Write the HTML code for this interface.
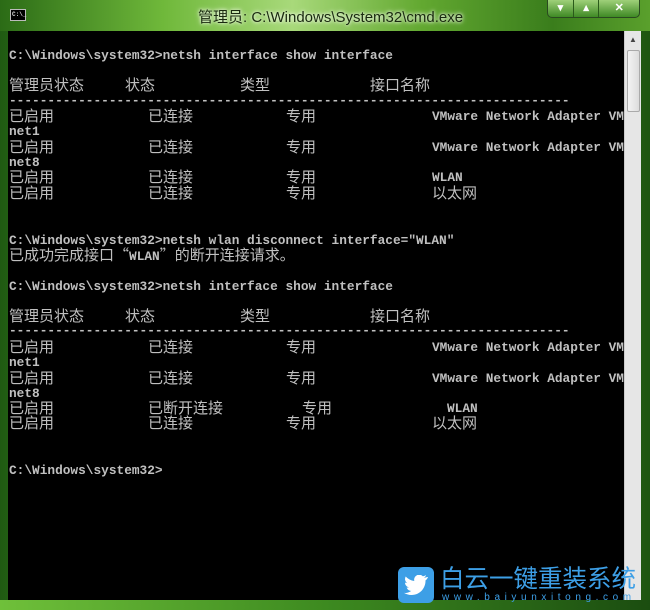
<!DOCTYPE html>
<html style="overflow:hidden;width:650px;height:610px"><head><meta charset="utf-8"><style>
*{margin:0;padding:0;box-sizing:border-box}
body{width:650px;height:610px;overflow:hidden;position:relative;background:linear-gradient(90deg,#1f5a12 0%,#4c9a25 20%,#2f6e18 40%,#7cc23e 60%,#3d8420 80%,#1e5510 100%);font-family:"Liberation Sans","Noto Sans CJK SC",sans-serif}
#title{position:absolute;left:0;top:0;width:650px;height:31px;background:linear-gradient(90deg,#2b6b16,#6fb83a 25%,#a8d97a 45%,#62a830 65%,#3a7d1c 85%,#5aa02c)}
#tt{position:absolute;left:198px;top:6px;font-size:15px;color:#1a2a10;text-shadow:0 0 6px #e8f5d8,0 0 3px #fff}
#ico{position:absolute;left:10px;top:9px;width:16px;height:12px;background:#000;border:1px solid #bbb;font:bold 6px "Liberation Mono",monospace;color:#ddd;line-height:9px;padding-left:1px}
#btns{position:absolute;left:547px;top:0;width:93px;height:18px;border:1px solid #2a4a20;border-top:none;border-radius:0 0 5px 5px;background:linear-gradient(#9fd07a,#3f8a25);display:flex}
#btns div{flex:1;border-right:1px solid #2a5a1a;color:#fff;font:bold 11px "Liberation Sans",sans-serif;text-align:center;line-height:17px}
#con{position:absolute;left:8px;top:31px;width:616px;height:569px;background:#000}
#sb{position:absolute;left:624px;top:31px;width:17px;height:569px;background:#e6e6e6;border-left:1px solid #ccc}
#thumb{position:absolute;left:2px;top:19px;width:13px;height:62px;background:linear-gradient(90deg,#f4f4f4,#dcdcdc);border:1px solid #aaa;border-radius:2px}
#bot{position:absolute;left:0;top:600px;width:650px;height:10px;background:linear-gradient(90deg,#6fc03a,#3d8a20 50%,#1b4d10)}
.r{position:absolute;color:#c0c0c0;white-space:pre;font:bold 12.8px/16px "Liberation Mono",monospace}
.c{position:absolute;color:#c0c0c0;white-space:pre;font:15px/16px "Noto Sans CJK SC",sans-serif}
#logo{position:absolute;left:398px;top:567px;width:36px;height:36px;background:#3d9fe6;border-radius:6px;text-align:center}
#lt{position:absolute;left:440px;top:563px;font:24.5px/30px "Noto Sans CJK SC",sans-serif;color:#3d9fe6;white-space:nowrap}
#lu{position:absolute;left:442px;top:592px;font:10px/12px "Liberation Sans",sans-serif;color:#3d9fe6;letter-spacing:4.6px;white-space:nowrap}
</style></head><body>
<div id="title"><div id="ico">C:\_</div><div id="tt">管理员: C:\Windows\System32\cmd.exe</div>
<div id="btns"><div>▾</div><div>▴</div><div style="flex:1.6;border:none">✕</div></div></div>
<div id="con"></div>
<div id="sb"><div style="text-align:center;font-size:8px;color:#444;margin-top:4px">▲</div><div id="thumb"></div></div>
<div id="bot"></div>

<div class="r" style="left:9px;top:48px">C:\Windows\system32&gt;netsh interface show interface</div>
<div class="c" style="left:9px;top:77px">管理员状态</div><div class="c" style="left:125px;top:77px">状态</div><div class="c" style="left:240px;top:77px">类型</div><div class="c" style="left:370px;top:77px">接口名称</div>
<div class="r" style="left:9px;top:93px">-------------------------------------------------------------------------</div>
<div class="c" style="left:9px;top:108px">已启用</div><div class="c" style="left:148px;top:108px">已连接</div><div class="c" style="left:286px;top:108px">专用</div><div class="r" style="left:432px;top:109px">VMware Network Adapter VM</div>
<div class="r" style="left:9px;top:124px">net1</div>
<div class="c" style="left:9px;top:139px">已启用</div><div class="c" style="left:148px;top:139px">已连接</div><div class="c" style="left:286px;top:139px">专用</div><div class="r" style="left:432px;top:140px">VMware Network Adapter VM</div>
<div class="r" style="left:9px;top:155px">net8</div>
<div class="c" style="left:9px;top:169px">已启用</div><div class="c" style="left:148px;top:169px">已连接</div><div class="c" style="left:286px;top:169px">专用</div><div class="r" style="left:432px;top:170px">WLAN</div>
<div class="c" style="left:9px;top:185px">已启用</div><div class="c" style="left:148px;top:185px">已连接</div><div class="c" style="left:286px;top:185px">专用</div><div class="c" style="left:432px;top:185px">以太网</div>

<div class="r" style="left:9px;top:233px">C:\Windows\system32&gt;netsh wlan disconnect interface="WLAN"</div>
<div class="c" style="left:9px;top:247px">已成功完成接口“<b style="font:bold 12.8px 'Liberation Mono',monospace">WLAN</b>”的断开连接请求。</div>

<div class="r" style="left:9px;top:279px">C:\Windows\system32&gt;netsh interface show interface</div>
<div class="c" style="left:9px;top:308px">管理员状态</div><div class="c" style="left:125px;top:308px">状态</div><div class="c" style="left:240px;top:308px">类型</div><div class="c" style="left:370px;top:308px">接口名称</div>
<div class="r" style="left:9px;top:323px">-------------------------------------------------------------------------</div>
<div class="c" style="left:9px;top:339px">已启用</div><div class="c" style="left:148px;top:339px">已连接</div><div class="c" style="left:286px;top:339px">专用</div><div class="r" style="left:432px;top:340px">VMware Network Adapter VM</div>
<div class="r" style="left:9px;top:355px">net1</div>
<div class="c" style="left:9px;top:370px">已启用</div><div class="c" style="left:148px;top:370px">已连接</div><div class="c" style="left:286px;top:370px">专用</div><div class="r" style="left:432px;top:371px">VMware Network Adapter VM</div>
<div class="r" style="left:9px;top:386px">net8</div>
<div class="c" style="left:9px;top:400px">已启用</div><div class="c" style="left:148px;top:400px">已断开连接</div><div class="c" style="left:302px;top:400px">专用</div><div class="r" style="left:447px;top:401px">WLAN</div>
<div class="c" style="left:9px;top:415px">已启用</div><div class="c" style="left:148px;top:415px">已连接</div><div class="c" style="left:286px;top:415px">专用</div><div class="c" style="left:432px;top:415px">以太网</div>

<div class="r" style="left:9px;top:463px">C:\Windows\system32&gt;</div>

<div id="logo"><svg width="24" height="20" viewBox="0 0 24 20" style="margin-top:8px"><path d="M23 2c-1 .5-2 .7-3 .8 1-.6 1.8-1.6 2-2.7-1 .6-2 1-3.2 1.2A5 5 0 0 0 10.3 6 14 14 0 0 1 1.7 1.5a5 5 0 0 0 1.5 6.6c-.8 0-1.6-.3-2.2-.6 0 2.4 1.7 4.4 4 4.9-.8.2-1.5.2-2.3.1.7 2 2.5 3.4 4.6 3.4A10 10 0 0 1 0 17.9 14 14 0 0 0 7.5 20c9 0 14-7.5 14-14v-.6c1-.7 1.8-1.6 2.5-3.4z" fill="#fff"/></svg></div>
<div id="lt">白云一键重装系统</div>
<div id="lu">www.baiyunxitong.com</div>
</body></html>
